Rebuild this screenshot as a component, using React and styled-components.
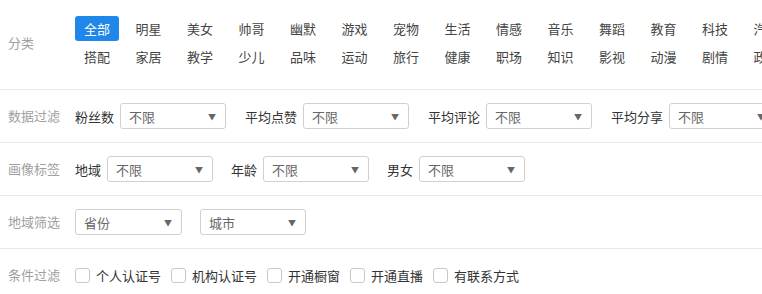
import React from 'react'
import styled, { createGlobalStyle } from 'styled-components'

const GlobalStyle = createGlobalStyle`
  body {
    margin: 0;
    background: #fff;
    font-family: "Noto Sans CJK SC", "Microsoft YaHei", sans-serif;
    font-size: 13px;
    color: #333;
  }
`

const Page = styled.div`
  width: 762px;
  overflow: hidden;
`

const Section = styled.div`
  display: flex;
  align-items: center;
  border-top: ${props => (props.first ? 'none' : '1px solid #e9e9e9')};
  padding: ${props => (props.first ? '16px 0 20px' : '0')};
  height: ${props => (props.first ? 'auto' : '52px')};
`

const Label = styled.div`
  flex: 0 0 67px;
  padding-left: 8px;
  color: #a0a0a0;
  font-size: 13px;
  line-height: 20px;
  white-space: nowrap;
`

const Body = styled.div`
  display: flex;
  flex-direction: ${props => (props.column ? 'column' : 'row')};
  align-items: ${props => (props.column ? 'flex-start' : 'center')};
  gap: ${props => props.gap || 0}px;
  flex: 1;
  min-width: 0;
`

const TagRow = styled.div`
  display: flex;
  gap: 7.5px;
  white-space: nowrap;
`

const Tag = styled.span`
  flex: 0 0 44px;
  height: 25px;
  line-height: 25px;
  text-align: center;
  border-radius: 3px;
  cursor: pointer;
  color: ${props => (props.active ? '#fff' : '#444')};
  background: ${props => (props.active ? '#1f87ea' : 'transparent')};
`

const Field = styled.div`
  display: flex;
  align-items: center;
  gap: 6px;
  flex-shrink: 0;
`

const FieldName = styled.span`
  color: #333;
  white-space: nowrap;
`

const Select = styled.div`
  width: ${props => props.width || 106}px;
  height: 26px;
  box-sizing: border-box;
  border: 1px solid #d0d0d0;
  border-radius: 3px;
  display: flex;
  align-items: center;
  justify-content: space-between;
  padding: 0 9px 0 8px;
  color: #666;
  flex-shrink: 0;
`

const Arrow = styled.span`
  font-size: 8px;
  color: #666;
`

const Check = styled.label`
  display: flex;
  align-items: center;
  gap: 6px;
  color: #333;
  white-space: nowrap;
`

const Box = styled.span`
  width: 13px;
  height: 13px;
  border: 1px solid #c8c8c8;
  border-radius: 3px;
  background: #fff;
`

const row1 = ['全部', '明星', '美女', '帅哥', '幽默', '游戏', '宠物', '生活', '情感', '音乐', '舞蹈', '教育', '科技', '汽车']
const row2 = ['搭配', '家居', '教学', '少儿', '品味', '运动', '旅行', '健康', '职场', '知识', '影视', '动漫', '剧情', '政务']

const Dropdown = ({ text = '不限', width }) => (
  <Select width={width}>
    <span>{text}</span>
    <Arrow>▼</Arrow>
  </Select>
)

export default function App() {
  return (
    <Page>
      <GlobalStyle />
      <Section first>
        <Label>分类</Label>
        <Body column gap={3}>
          <TagRow>
            {row1.map((t, i) => <Tag key={t} active={i === 0}>{t}</Tag>)}
          </TagRow>
          <TagRow>
            {row2.map(t => <Tag key={t}>{t}</Tag>)}
          </TagRow>
        </Body>
      </Section>
      <Section>
        <Label>数据过滤</Label>
        <Body gap={19}>
          <Field><FieldName>粉丝数</FieldName><Dropdown /></Field>
          <Field><FieldName>平均点赞</FieldName><Dropdown /></Field>
          <Field><FieldName>平均评论</FieldName><Dropdown /></Field>
          <Field><FieldName>平均分享</FieldName><Dropdown /></Field>
        </Body>
      </Section>
      <Section>
        <Label>画像标签</Label>
        <Body gap={18}>
          <Field><FieldName>地域</FieldName><Dropdown /></Field>
          <Field><FieldName>年龄</FieldName><Dropdown /></Field>
          <Field><FieldName>男女</FieldName><Dropdown /></Field>
        </Body>
      </Section>
      <Section>
        <Label>地域筛选</Label>
        <Body gap={18}>
          <Dropdown text="省份" width={107} />
          <Dropdown text="城市" width={106} />
        </Body>
      </Section>
      <Section>
        <Label>条件过滤</Label>
        <Body gap={10}>
          {['个人认证号', '机构认证号', '开通橱窗', '开通直播', '有联系方式'].map(t => (
            <Check key={t}><Box />{t}</Check>
          ))}
        </Body>
      </Section>
    </Page>
  )
}
